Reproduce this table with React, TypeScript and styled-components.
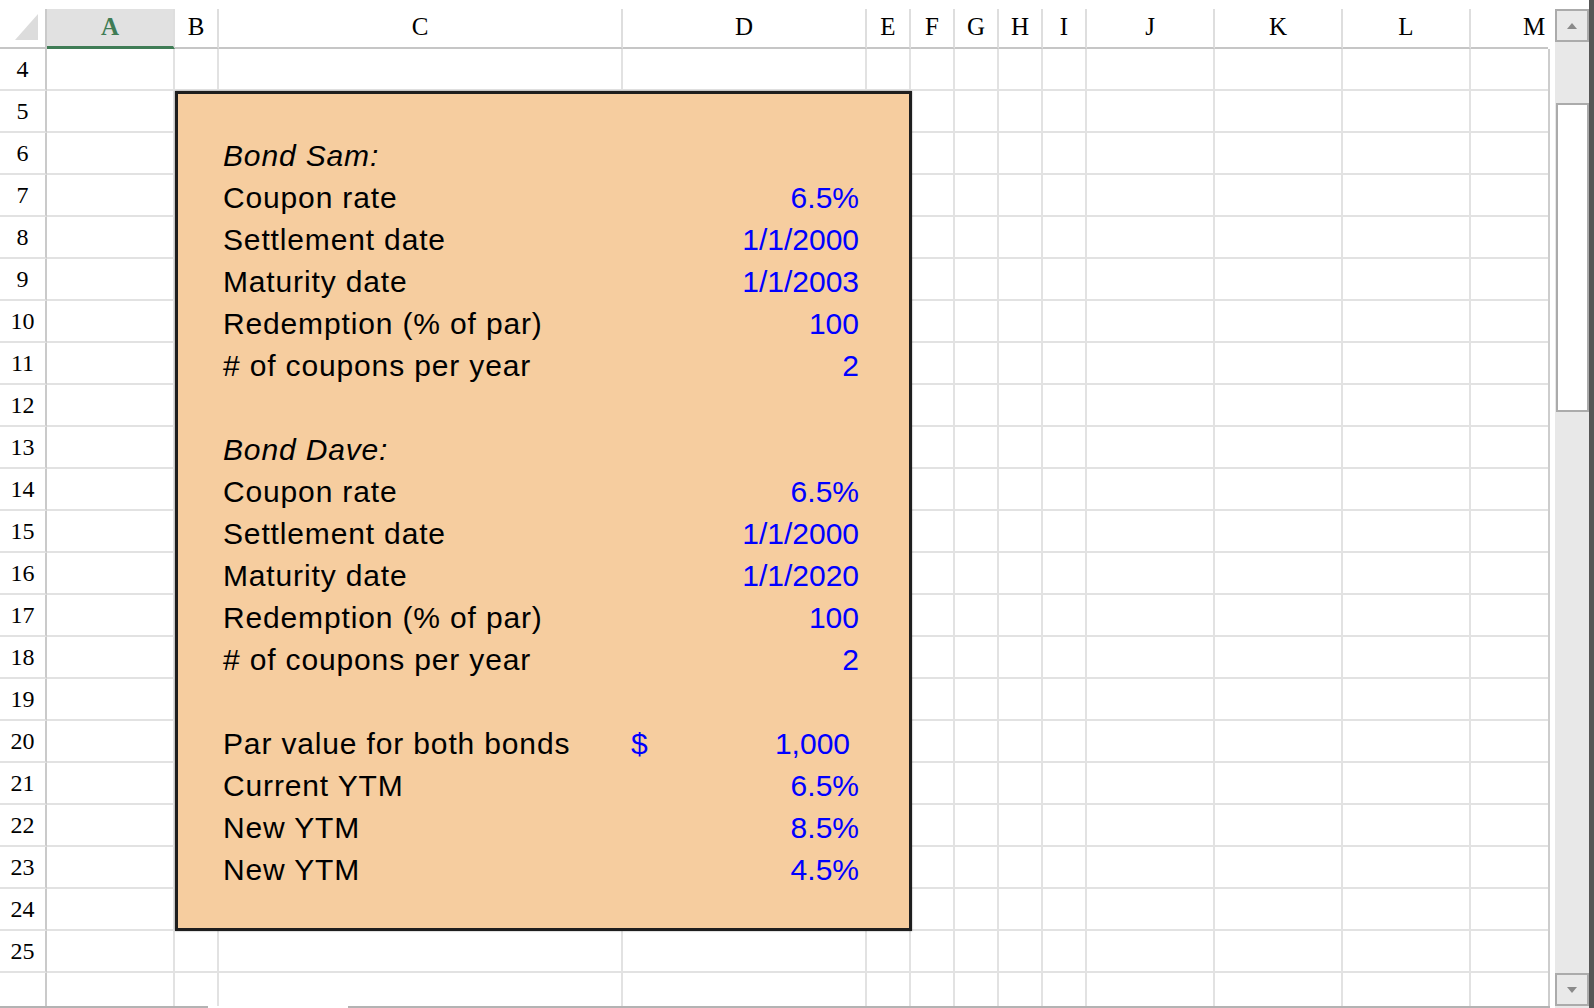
import React from 'react';
import styled, { createGlobalStyle } from 'styled-components';

type Column = { name: string; width: number };

type Entry = {
	label: string;
	value?: string;
	heading?: boolean;
	currency?: boolean;
} | null;

const COLUMNS: Column[] = [
	{ name: 'A', width: 128 },
	{ name: 'B', width: 44 },
	{ name: 'C', width: 404 },
	{ name: 'D', width: 244 },
	{ name: 'E', width: 44 },
	{ name: 'F', width: 44 },
	{ name: 'G', width: 44 },
	{ name: 'H', width: 44 },
	{ name: 'I', width: 44 },
	{ name: 'J', width: 128 },
	{ name: 'K', width: 128 },
	{ name: 'L', width: 128 },
	{ name: 'M', width: 128 },
];

const FIRST_ROW = 4;
const LAST_ROW = 26;
// last row is only half on screen, its number isn't drawn
const LAST_LABELLED_ROW = 25;
// the bordered block covers B..E on rows 5..24
const BLOCK_ROWS = [5, 24];
const BLOCK_COLS = ['B', 'C', 'D', 'E'];

const PANEL_ROWS: Entry[] = [
	{ label: 'Bond Sam:', heading: true },
	{ label: 'Coupon rate', value: '6.5%' },
	{ label: 'Settlement date', value: '1/1/2000' },
	{ label: 'Maturity date', value: '1/1/2003' },
	{ label: 'Redemption (% of par)', value: '100' },
	{ label: '# of coupons per year', value: '2' },
	null,
	{ label: 'Bond Dave:', heading: true },
	{ label: 'Coupon rate', value: '6.5%' },
	{ label: 'Settlement date', value: '1/1/2000' },
	{ label: 'Maturity date', value: '1/1/2020' },
	{ label: 'Redemption (% of par)', value: '100' },
	{ label: '# of coupons per year', value: '2' },
	null,
	{ label: 'Par value for both bonds', value: '1,000', currency: true },
	{ label: 'Current YTM', value: '6.5%' },
	{ label: 'New YTM', value: '8.5%' },
	{ label: 'New YTM', value: '4.5%' },
];

const GlobalStyle = createGlobalStyle`
	html, body {
		margin: 0;
		padding: 0;
		background: #ffffff;
		overflow: hidden;
	}
`;

const App = () => {
	const rows: number[] = [];
	for (let r = FIRST_ROW; r <= LAST_ROW; r++) rows.push(r);

	return (
		<>
			<GlobalStyle />
			<Window>
				<SheetPane>
					<SheetBody>
						<Clip>
							<Sheet>
								<Corner>
									<svg width="47" height="38" viewBox="0 0 47 38">
										<polygon points="15,31 38,31 38,5" fill="#dcdcdc" />
									</svg>
								</Corner>
								{COLUMNS.map((c) => (
									<ColHeader key={c.name} $active={c.name === 'A'}>
										{c.name}
									</ColHeader>
								))}

								<Panel>
									{PANEL_ROWS.map((entry, i) => (
										<PanelRow key={i}>
											{entry && (
												<>
													<Label $italic={entry.heading}>{entry.label}</Label>
													{entry.currency ? (
														<Value $currency>
															<span>$</span>
															<span>{entry.value}</span>
														</Value>
													) : (
														<Value>{entry.value}</Value>
													)}
												</>
											)}
										</PanelRow>
									))}
								</Panel>

								{rows.map((r) => {
									const inBlock = r >= BLOCK_ROWS[0] && r <= BLOCK_ROWS[1];
									return (
										<React.Fragment key={r}>
											<RowHeader>{r <= LAST_LABELLED_ROW ? r : ''}</RowHeader>
											{COLUMNS.filter(
												(c) => !(inBlock && BLOCK_COLS.includes(c.name))
											).map((c) => (
												<Cell key={c.name} />
											))}
										</React.Fragment>
									);
								})}
							</Sheet>
						</Clip>
						<EdgeLine />
					</SheetBody>
					<BottomEdge>
						<EdgeSegment $width={208} />
						<EdgeGap />
						<EdgeSegment />
					</BottomEdge>
				</SheetPane>

				<Gutter />

				<Scrollbar>
					<ScrollCap />
					<ScrollButton>
						<svg width="12" height="8" viewBox="0 0 12 8">
							<polygon points="1,7 11,7 6,1" fill="#8a8a8a" />
						</svg>
					</ScrollButton>
					<Track>
						<Thumb />
					</Track>
					<ScrollButton>
						<svg width="12" height="8" viewBox="0 0 12 8">
							<polygon points="1,1 11,1 6,7" fill="#8a8a8a" />
						</svg>
					</ScrollButton>
					<ScrollFoot />
				</Scrollbar>
			</Window>
		</>
	);
};

const Window = styled.div`
	display: flex;
	width: 1594px;
	height: 1008px;
	overflow: hidden;
	background: #ffffff;
`;

const SheetPane = styled.div`
	display: flex;
	flex-direction: column;
	width: 1550px;
	height: 100%;
`;

const SheetBody = styled.div`
	flex: 1;
	display: flex;
	min-height: 0;
`;

const Clip = styled.div`
	width: 1548px;
	height: 100%;
	overflow: hidden;
	padding-top: 9px;
	box-sizing: border-box;
`;

const EdgeLine = styled.div`
	width: 2px;
	background: linear-gradient(#ffffff 49px, #cdcdcd 49px);
`;

const BottomEdge = styled.div`
	display: flex;
	height: 2px;
`;

const EdgeSegment = styled.div<{ $width?: number }>`
	flex: ${(p) => (p.$width ? `0 0 ${p.$width}px` : '1')};
	background: #b3b3b3;
`;

const EdgeGap = styled.div`
	flex: 0 0 140px;
`;

const Sheet = styled.div`
	display: grid;
	grid-template-columns: 47px ${COLUMNS.map((c) => `${c.width}px`).join(' ')};
	grid-template-rows: 40px;
	grid-auto-rows: 42px;
	width: max-content;
`;

const Corner = styled.div`
	box-sizing: border-box;
	border-right: 2px solid #cacaca;
	border-bottom: 2px solid #c6c6c6;
	overflow: hidden;
	svg {
		display: block;
	}
`;

const ColHeader = styled.div<{ $active?: boolean }>`
	box-sizing: border-box;
	display: flex;
	align-items: center;
	justify-content: center;
	padding-bottom: 3px;
	border-right: 2px solid #dedede;
	border-bottom: ${(p) => (p.$active ? '3px solid #3f7c55' : '2px solid #c6c6c6')};
	background: ${(p) => (p.$active ? '#e1e1e1' : '#ffffff')};
	color: ${(p) => (p.$active ? '#3f7c55' : '#000000')};
	font-family: 'Liberation Serif', 'Times New Roman', serif;
	font-weight: ${(p) => (p.$active ? 700 : 400)};
	font-size: 25px;
	line-height: 1;
`;

const RowHeader = styled.div`
	box-sizing: border-box;
	display: flex;
	align-items: center;
	justify-content: center;
	border-right: 2px solid #cacaca;
	border-bottom: 2px solid #e2e2e2;
	font-family: 'Liberation Serif', 'Times New Roman', serif;
	font-size: 24px;
	line-height: 1;
	color: #000000;
`;

const Cell = styled.div`
	box-sizing: border-box;
	border-right: 2px solid #e2e2e2;
	border-bottom: 2px solid #e2e2e2;
`;

const Panel = styled.div`
	grid-column: 3 / 7;
	grid-row: 3 / 23;
	position: relative;
	z-index: 1;
	box-sizing: border-box;
	display: grid;
	grid-template-columns: 41px 404px 244px 1fr;
	grid-auto-rows: 42px;
	align-content: start;
	margin-right: -1px;
	padding-top: 39px;
	background: #f6cd9f;
	border: 3px solid #1e1e1e;
	box-shadow: 0 0 1.5px rgba(0, 0, 0, 0.45);
`;

const PanelRow = styled.div`
	grid-column: 2 / 4;
	display: grid;
	grid-template-columns: 404px 244px;
	font-family: 'Liberation Sans', Arial, sans-serif;
	font-size: 30px;
	line-height: 34px;
`;

const Label = styled.div<{ $italic?: boolean }>`
	display: flex;
	align-items: flex-end;
	padding: 0 0 2px 4px;
	color: #000000;
	font-style: ${(p) => (p.$italic ? 'italic' : 'normal')};
	letter-spacing: 0.85px;
	white-space: nowrap;
`;

const Value = styled.div<{ $currency?: boolean }>`
	display: flex;
	align-items: flex-end;
	justify-content: ${(p) => (p.$currency ? 'space-between' : 'flex-end')};
	padding: ${(p) => (p.$currency ? '0 17px 2px 8px' : '0 8px 2px 0')};
	color: #0000ff;
	white-space: nowrap;
`;

const Gutter = styled.div`
	width: 5px;
	background: #ffffff;
`;

const Scrollbar = styled.div`
	display: flex;
	flex-direction: column;
	width: 34px;
	height: 100%;
	border-right: 5px solid #565656;
`;

const ScrollCap = styled.div`
	height: 9px;
	background: #ffffff;
`;

const ScrollFoot = styled.div`
	height: 2px;
	background: #e8e8e8;
`;

const ScrollButton = styled.div`
	box-sizing: border-box;
	height: 33px;
	display: flex;
	align-items: center;
	justify-content: center;
	background: #e9e9e9;
	border: 2px solid #ababab;
	svg {
		display: block;
	}
`;

const Track = styled.div`
	flex: 1;
	padding-top: 61px;
	background: #e8e8e8;
`;

const Thumb = styled.div`
	box-sizing: border-box;
	height: 309px;
	margin-left: 1px;
	background: #ffffff;
	border: 2px solid #ababab;
`;

export default App;
